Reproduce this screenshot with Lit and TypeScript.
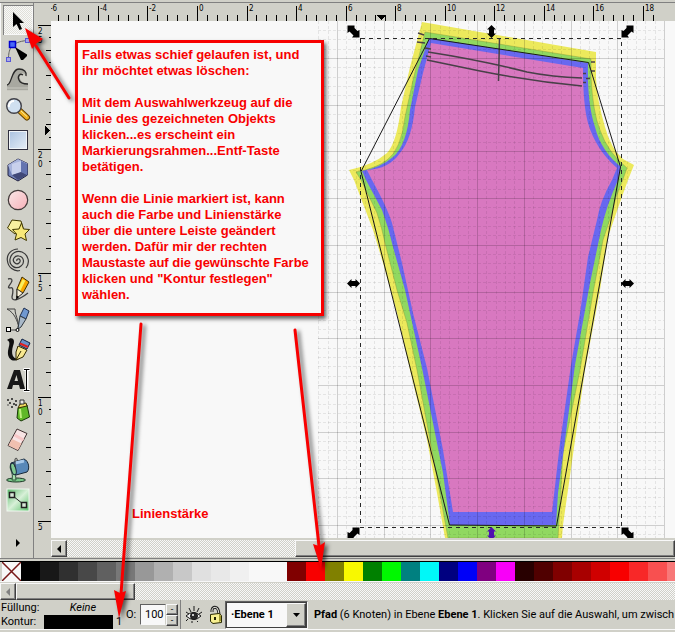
import { LitElement, html, svg, css } from "lit";
import { customElement, state } from "lit/decorators.js";

const range = (from: number, to: number) =>
  Array.from({ length: to - from + 1 }, (_, i) => from + i);

/* Tool icons, each drawn in a 30 x 30 box. */
const tools = [
  { name: "Auswahlwerkzeug", icon: svg`<path d="M10 7V22L13.5 19 16.5 25 19 24 16.5 18H21Z" fill="#000"/>` },
  { name: "Knoten bearbeiten", icon: svg`
    <path d="M5.5 22C6 14 8 7 24 5.5" fill="none" stroke="#606060"/>
    <rect x="3.5" y="22.5" width="4" height="4" fill="#a8a8e8" stroke="#5858d8"/>
    <rect x="22.5" y="3.5" width="4" height="4" fill="#a8a8e8" stroke="#5858d8"/>
    <rect x="6.5" y="6.5" width="6" height="6" fill="#4868f8" stroke="#0000d0" stroke-width="1.5"/>
    <path d="M12 12 24 19.5V21L20 25H18Z" fill="#000"/>` },
  { name: "Objekte verbessern", icon: svg`
    <path d="M4 20C8 20 8 4 16 4C21 4 24 7 23 11C22 8 18 7 17 10C15 14 20 19 25 19V26H4Z" fill="#a8a8a0"/>
    <path d="M4 20C9 20 8 4 16 4C21 4 24 7 23 11M20 10C17 8 14 11 16 15C17 18 20 19 25 19" fill="none" stroke="#282828" stroke-width="1.3"/>
    <path d="M4 23H25M4 25.5H25" stroke="#c8c8c0"/>` },
  { name: "Zoom", icon: svg`
    <path d="M17 16 24 22.5" stroke="#604000" stroke-width="6" stroke-linecap="round"/>
    <path d="M17 16 24 22.5" stroke="#f0b020" stroke-width="4" stroke-linecap="round"/>
    <path d="M18 16 24 21.5" stroke="#f8f0a0" stroke-width="1"/>
    <circle cx="11" cy="11" r="7.3" fill="#d0e0f0" stroke="#404048" stroke-width="1.4"/>
    <path d="M6 12A5 5 0 0 1 11 6" fill="none" stroke="#fff" stroke-width="2"/>` },
  { name: "Rechteck", icon: svg`
    <rect x="5.5" y="5.5" width="19" height="19" fill="url(#blue)" stroke="#303040"/>
    <rect x="6.5" y="6.5" width="17" height="17" fill="none" stroke="#f0f4f8"/>` },
  { name: "3D-Quader", icon: svg`
    <path d="M5 10 15 4 24.5 8.5V20L15 26 5 20.5Z" fill="#7080b8" stroke="#202040" stroke-linejoin="round"/>
    <path d="M5 10 15 4 24.5 8.5 20 17 9 20Z" fill="#a8b4dc"/>
    <path d="M9 9 18 6V17L9 20Z" fill="#c8d0ec"/><path d="M18 6 24.5 9V20L18 17Z" fill="#6474b0"/>
    <path d="M9 20 18 17 24 20 15 25Z" fill="#404878"/>` },
  { name: "Ellipse", icon: svg`<circle cx="15" cy="15" r="9.7" fill="url(#pink)" stroke="#403838" stroke-width="1.2"/>` },
  { name: "Stern", icon: svg`
    <path d="M9 5 18 6 20 13 12 19 4.5 13Z" fill="#f8f0a0" stroke="#403800" stroke-linejoin="round"/>
    <path d="M18.500 8 20.500 14 26.500 14.500 22 19 23.500 25.500 18 22.500 12 25 13.500 19 9.500 14.500 16 14Z" fill="#f8e878" stroke="#403800" stroke-linejoin="round"/>` },
  { name: "Spirale", icon: svg`<path d="M14 16C13 14 16 13 17 15C18 18 14 20 12 18C8 15 12 10 16 11C21 12 22 18 18 21C13 25 6 21 7 14C8 8 14 5 19 7C26 10 27 18 23 23M4.500 16C5 22 11 27 17 25.500M4.500 16C3 9 9 4 15 4" fill="none" stroke="#383838" stroke-width="1.2"/>` },
  { name: "Freihandlinien", icon: svg`
    <path d="M5 4C9 3 10 5 8 8C6 11 4 13 7 13C11 11 10 18 9 22C9 27 16 25 25 18" fill="none" stroke="#404040" stroke-width="1.300"/>
    <path d="M19 2 26 7 20 18 14 22 14 14Z" fill="#f8a800" stroke="#403000"/>
    <path d="M21 5 16 15" stroke="#f8f060" stroke-width="3"/>
    <path d="M14 14 20 18 14 23Z" fill="#f8f0d8" stroke="#303030"/><path d="M13.500 20.500 16 22 13 25Z"/>` },
  { name: "Bezierkurven", icon: svg`
    <path d="M4 4H12C12 12 18 18 14 25H6M4 4C12 8 14 16 16 22" fill="none" stroke="#404040"/>
    <path d="M21 3 26 6 23 14 17 11Z" fill="#7098d0" stroke="#203050"/>
    <path d="M17 11 23 14 18 22 15 24 16 17Z" fill="#a8b8c8" stroke="#303840"/>
    <rect x="3.5" y="22.5" width="4" height="4" fill="#fff" stroke="#000"/>
    <circle cx="14.5" cy="25" r="1.5" fill="#fff" stroke="#000"/>` },
  { name: "Kalligrafie", icon: svg`
    <path d="M4 5C9 1 13 4 10 11C8 18 9 24 16 24C10 28 4 24 5 16C6 10 8 7 4 5Z" fill="#101010"/>
    <path d="M19 4 27 8 24 14 16 10Z" fill="#6890c8" stroke="#102040"/>
    <path d="M17 8.5 25 12" stroke="#e02020" stroke-width="2"/>
    <path d="M15 11 24 15 20 22 13 25 13 17Z" fill="#f8e890" stroke="#302800"/>
    <path d="M13 25 18 16" stroke="#302800"/>` },
  { name: "Text", icon: svg`
    <path d="M4 24 11 5H17L22 24H17L16 20H10L9 24ZM11.500 16H15L13.500 10Z" fill="#181818" fill-rule="evenodd"/>
    <path d="M20.500 4.500H27M20.500 25.500H27M24 4.500V25.500" stroke="#fff" stroke-width="3"/>
    <path d="M21 4.500H26.500M21 25.500H26.500M23.500 5V25" stroke="#000"/>` },
  { name: "Sprühdose", icon: svg`
    <path d="M15 13 24 10 26.500 22 18 26 14 23Z" fill="#60b828" stroke="#183808"/>
    <path d="M17 14 18 23" stroke="#c0f080" stroke-width="2"/>
    <path d="M15 13 17 9 23 8 24 11Z" fill="#f0d860" stroke="#383000"/>
    <path d="M17 5H21V9H17Z" fill="#e8e8e8" stroke="#303030"/>
    <g fill="#202020"><circle cx="5" cy="5" r="1"/><circle cx="9" cy="4" r="1"/><circle cx="13" cy="6" r="1"/><circle cx="7" cy="8" r="1"/><circle cx="11" cy="9" r="1"/><circle cx="9" cy="12" r="1"/><circle cx="13" cy="10" r="1"/><circle cx="5" cy="10" r=".7"/></g>` },
  { name: "Radierer", icon: svg`
    <path d="M14 4 24 8.500 15 25.500 5 20.500Z" fill="#f8e4e4" stroke="#403030" stroke-linejoin="round"/>
    <path d="M9 14 18.500 18.500 15 25 5.500 20.500Z" fill="#f0c0b0"/>
    <path d="M11.500 10 20.500 15" stroke="#f8c8c8" stroke-width="3"/>` },
  { name: "Füllen", icon: svg`
    <ellipse cx="13" cy="25" rx="9.500" ry="2" fill="#78c888" stroke="#203828"/>
    <path d="M8 9C5 14 11 17 9 25H13C12 18 13 16 12 12Z" fill="#a8e0b0" stroke="#305038"/>
    <path d="M8 8 21 4C26 6 27 14 24 17L13 20C9 18 7 12 8 8Z" fill="#5888b8" stroke="#182838"/>
    <path d="M12 8 21 6" stroke="#a8c8e8" stroke-width="3"/>
    <ellipse cx="10.500" cy="14" rx="2.300" ry="6" transform="rotate(-15 10.500 14)" fill="#80c890" stroke="#182838"/>
    <path d="M12 12V5C12 2 15 3 14 6" fill="none" stroke="#303030"/>` },
  { name: "Objektverbinder", icon: svg`
    <rect x="4" y="4" width="22" height="22" fill="url(#green)" stroke="#f0f8f0"/>
    <path d="M10 11 20 19" stroke="#282828"/>
    <rect x="6.500" y="7.500" width="5" height="5" fill="#d8e8d8" stroke="#202020" stroke-width="1.500"/>
    <rect x="18.500" y="17.500" width="5" height="5" fill="#d8e8d8" stroke="#202020" stroke-width="1.500"/>` },
];

const palette = [
  "#000000", "#181818", "#303030", "#484848", "#606060", "#787878", "#989898",
  "#b0b0b0", "#c8c8c8", "#e0e0e0", "#e8e8e8", "#f0f0f0", "#f8f8f8", "#f8f8f8",
  "#800000", "#f80000", "#808000", "#f8f800", "#008000", "#00f800", "#008080",
  "#00f8f8", "#000080", "#0000f8", "#800080", "#f800f8", "#280000", "#500000",
  "#800000", "#a80000", "#d00000", "#f80000", "#f82828", "#f85050", "#f87878",
  "#f8a8a8", "#f8d0d0",
];

const straightHandle = svg`<path d="M-6.500 0-2-4.500V-2.500H2V-4.500L6.500 0 2 4.500V2.500H-2V4.500Z"/>`;
const cornerHandle = svg`<path d="M-6-6H1V-3.500L4-.500 6-1.500V6H-1.500L0 4-4 0-6 1.500Z"/>`;

/* Redraws with as many marks as the window has room for. */
class Ruler extends LitElement {
  private redraw = () => this.requestUpdate();
  connectedCallback() {
    super.connectedCallback();
    window.addEventListener("resize", this.redraw);
  }
  disconnectedCallback() {
    window.removeEventListener("resize", this.redraw);
    super.disconnectedCallback();
  }
}

@customElement("top-ruler")
class TopRuler extends Ruler {
  static styles = css`
    :host { display: block; height: 18px; overflow: hidden; }
    svg { display: block; width: 100%; height: 18px; shape-rendering: crispEdges; }
    text { font: 8px "DejaVu Sans Condensed", "DejaVu Sans", sans-serif; }
  `;
  render() {
    const last = Math.floor((window.innerWidth - 51 - 160) / 9.91);
    return html`<svg aria-hidden="true">
      ${range(-15, last).map((i) => {
        const x = Math.round(146 + i * 9.91);
        const major = i % 5 === 0;
        return svg`<path d="M${x}.5 ${major ? 3 : 12}V18" stroke="#000"/>
          ${major ? svg`<text x=${x + 2} y="8">${(i / 5) * 2}</text>` : ""}`;
      })}
      <path d="M326 12H335L330.500 17Z"/>
    </svg>`;
  }
}

@customElement("side-ruler")
class SideRuler extends Ruler {
  static styles = css`
    :host { display: block; width: 17px; overflow: hidden; contain: size; }
    svg { display: block; width: 17px; height: 100%; shape-rendering: crispEdges; }
    text { font: 8px "DejaVu Sans Condensed", "DejaVu Sans", sans-serif; }
  `;
  render() {
    const last = Math.floor((window.innerHeight - 130) / 12.4);
    return html`<svg aria-hidden="true">
      ${range(0, last).map((i) => {
        const y = Math.round(4 + i * 12.4);
        const start = i % 10 === 0 ? 4 : i % 2 === 0 ? 12 : 15;
        const label = String(Math.abs(25 - i / 2));
        return svg`<path d="M${start} ${y}.5H17" stroke="#000"/>
          ${i % 10 === 0
            ? [...label].map((digit, n) => svg`<text x="4" y=${y + 9 + n * 9}>${digit}</text>`)
            : ""}`;
      })}
      <path d="M11 105V114L16 109.500Z"/>
    </svg>`;
  }
}

@customElement("drawing-canvas")
class DrawingCanvas extends LitElement {
  static styles = css`
    :host { display: block; background: #f8f8f8; overflow: hidden; contain: size; }
    svg { display: block; width: 100%; height: 100%; }
    .major { stroke: #000; stroke-opacity: 0.17; }
    .minor { stroke: #000; stroke-opacity: 0.08; stroke-dasharray: 3 2; }
    .seam { fill: none; stroke: #484048; stroke-width: 1.5; }
    .frame { fill: none; stroke: #282828; stroke-dasharray: 4 4; shape-rendering: crispEdges; }
  `;
  render() {
    return html`<svg role="img" aria-label="Schnittmuster mit Auswahlrahmen">
      <g transform="translate(-51 -21)">
        <path fill="#ece95c" d="M422 22 596 52V78Q597 100 605 127Q611 149 623 159L634 165 628 180 618 208 608 237 600 290 585 370 563 525 562 538H445L437 493 427 440 410 370 397 313 383 263 373 230 354 180 349 170Q373 165 387 153Q397 142 401 107L410 67Z"/>
        <path fill="#90d860" stroke="#889838" stroke-opacity=".6" stroke-width=".7" d="M425 32 591 59V77Q593 113 600 130Q608 153 627 168L622 182Q615 197 612 213L603 240 593 293 580 370 563 453 558 538H448L438 483 417 370 407 323 397 290 385 243Q382 228 377 213L361 180 356 172Q377 168 387 160Q401 150 405 117L413 80Z"/>
        <path fill="#6868f0" d="M429 38 588 63Q587 103 595 127Q601 151 621 167L618 180Q606 207 601 230L590 283 575 365 558 493 556 525H450L443 473 422 368 405 290 393 247Q389 229 382 210L366 180 362 171Q380 168 393 157Q407 145 410 110L418 70Z"/>
        <path fill="#d878c0" d="M431 43 583 68Q583 105 588 123Q596 150 617 168L612 180Q600 201 597 220L588 257 580 313 571 365 560 443 552 512H453L443 450 427 368 413 313 402 263 392 223Q387 207 372 180L367 170Q389 169 400 153Q412 139 415 107L423 73Z"/>
        ${range(-40, 36).map((i) => {
          const x = 337.5 + Math.round(i * 9.34);
          return x > 317 && x < 666
            ? svg`<path class=${i % 5 === 0 ? "major" : "minor"} d="M${x} 21V538"/>` : "";
        })}
        ${range(-3, 51).map((i) => {
          const y = 58.5 + Math.round(i * 9.34);
          return svg`<path class=${i % 5 === 0 ? "major" : "minor"} d="M318 ${y}H664"/>`;
        })}
        <g class="seam">
          <path d="M428 52Q480 60 527 72Q552 77 582 78M427 60 480 71Q530 81 582 86M499.500 38 498.500 81"/>
          <path d="M418 33 424 35M417 42 425 43M425 48 431 49M426 56 431 57M591 62H595M591 71H595M583 73.500H586M586 78.500H590M583 82.500H586"/>
        </g>
        <path fill="none" stroke="#181818" d="M429.500 38.500 588.500 62.500 620.500 167 556.500 526 449.500 525 361 171.500Z"/>
        <path class="frame" d="M360.500 38.500H621.500V527.500H360.500Z"/>
        <g transform="translate(353.500 31.500)">${cornerHandle}</g>
        <g transform="translate(627.500 31.500) scale(-1 1)">${cornerHandle}</g>
        <g transform="translate(353.500 533.500) scale(-1 1)">${cornerHandle}</g>
        <g transform="translate(627.500 533.500)">${cornerHandle}</g>
        <g transform="translate(353.500 283.500)">${straightHandle}</g>
        <g transform="translate(627.500 283.500)">${straightHandle}</g>
        <g transform="translate(491.500 31.500) rotate(90)">${straightHandle}</g>
        <g transform="translate(491.500 533.500) rotate(90)" fill="#5010b0">${straightHandle}</g>
      </g>
    </svg>`;
  }
}

@customElement("app-root")
class AppRoot extends LitElement {
  @state() private activeTool = 0;

  static styles = css`
    :host {
      display: flex; flex-direction: column; position: relative; min-height: 100vh;
      overflow: hidden; background: #d0d0c8; color: #000;
      font: 11px/14px Roboto, "Liberation Sans", sans-serif;
    }
    * { box-sizing: border-box; }
    button, input, select { font: inherit; color: inherit; margin: 0; padding: 0; border-radius: 0; }
    svg { display: block; }
    .workspace {
      flex: 1; display: grid; grid-template-columns: 34px 1fr; margin-top: 2px;
      border-top: 1px solid #808080; border-bottom: 1px solid #808080;
    }
    .toolbox {
      display: flex; flex-direction: column; align-items: center; padding: 2px 1px 0 2px;
      border-left: 1px solid #f8f8f8; border-right: 1px solid #808080;
    }
    .tool { width: 30px; height: 30px; border: 0; background: none; }
    .tool svg { width: 30px; height: 30px; }
    .tool.on {
      background: repeating-conic-gradient(#f8f8f8 0 25%, #e0e0d8 0 50%) 0 0 / 2px 2px;
      box-shadow: inset 1px 1px #808080, inset -1px -1px #f8f8f8;
    }
    .more { margin-top: 20px; width: 30px; height: 16px; border: 0; background: none; }
    .editor { display: grid; grid-template: 18px 1fr 20px / 17px 1fr; min-width: 0; }
    .editor top-ruler { grid-column: 2; }
    .scroll {
      display: flex; height: 17px;
      background: repeating-conic-gradient(#f8f8f8 0 25%, #d0d0c8 0 50%) 0 0 / 2px 2px;
    }
    .editor .scroll { grid-column: 2; margin-top: 2px; }
    .raised {
      background: #d0d0c8; border: 1px solid; border-color: #f8f8f8 #404040 #404040 #f8f8f8;
      box-shadow: inset -1px -1px #808080;
    }
    .step { width: 16px; height: 17px; display: grid; place-items: center; flex: none; }
    .gap { width: 228px; }
    .rest { flex: 1; }
    .thumb { width: 119px; }
    .palette {
      display: flex; margin-top: 2px; padding-left: 2px; overflow: hidden;
      border-top: 1px solid #000; border-bottom: 1px solid #f8f8f8; background: #d0d0c8;
    }
    .swatch { width: 19px; height: 19px; flex: none; border: 0; }
    .none { background: #f8f8f8; }
    .palette + .scroll { margin-top: 1px; }
    .status {
      display: flex; align-items: center; height: 30px; white-space: nowrap; overflow: hidden;
      border-bottom: 1px solid #f8f8f8; margin-bottom: 2px;
    }
    .style { display: grid; grid-template-columns: 43px 69px 10px; padding-left: 1px; align-items: center; }
    .nofill { font-style: italic; text-align: center; padding-left: 9px; }
    .stroke { height: 14px; background: #000; border: 0; grid-column: 2; }
    .width { padding-left: 3px; }
    .opacity { display: flex; align-items: center; margin-left: 3px; }
    .opacity label { width: 14px; }
    .opacity input {
      width: 26px; height: 21px; padding-left: 4px; background: #f8f8f8;
      border: 1px solid; border-color: #606060 #d0d0c8 #f8f8f8 #606060;
    }
    .spin { display: grid; width: 12px; }
    .spin button { height: 11px; line-height: 8px; font-size: 9px; text-align: center; }
    .rule { width: 1px; height: 29px; background: #808080; margin: 0 4px 0 2px; }
    .icon { border: 0; background: none; width: 18px; height: 20px; flex: none; }
    .icon + .icon { margin: 0 0 0 4px; }
    .layer {
      position: relative; width: 83px; height: 28px; flex: none;
      border: 1px solid; border-color: #606060 #f8f8f8 #f8f8f8 #606060;
    }
    .layer select {
      appearance: none; width: 100%; height: 100%; border: 1px solid #404040;
      background: #f8f8f8; font-weight: bold; padding-left: 4px;
    }
    .layer .drop {
      position: absolute; top: 1px; right: 1px; bottom: 1px; width: 20px;
      display: grid; place-items: center; pointer-events: none;
    }
    .message { margin: 0 0 0 6px; }
    .note {
      position: absolute; left: 75px; top: 40px; width: 249px; height: 276px; padding: 4px;
      border: 3px solid #f80000; background: #f8f8f8; box-shadow: 2px 3px 4px rgba(0, 0, 0, 0.6);
    }
    .note, .label { color: #f80000; font: bold 13px/16px "Liberation Sans", Arial, sans-serif; white-space: nowrap; }
    .note p { margin: 0 0 16px; }
    .label { position: absolute; left: 132px; top: 506px; }
    .arrows {
      position: absolute; left: 0; top: 0; width: 100%; height: 100%; pointer-events: none;
      filter: drop-shadow(3px 2px 2px rgba(0, 0, 0, 0.6));
    }
  `;

  private leftArrow(color = "#000") {
    return html`<svg width="4" height="8" aria-hidden="true"><path d="M4 0V8L0 4Z" fill=${color}/></svg>`;
  }

  render() {
    return html`
      <div class="workspace">
        <div class="toolbox" role="toolbar" aria-label="Werkzeuge">
          ${tools.map((tool, i) => html`
            <button class="tool ${i === this.activeTool ? "on" : ""}" aria-label=${tool.name}
              @click=${() => (this.activeTool = i)}>
              <svg viewBox="0 0 30 30">
                <defs>
                  <linearGradient id="blue" x2="1" y2="1"><stop stop-color="#a8c0e0"/><stop offset="1" stop-color="#e8f0f8"/></linearGradient>
                  <linearGradient id="pink" x2="1" y2="1"><stop stop-color="#f8e8e8"/><stop offset="1" stop-color="#f8b0b8"/></linearGradient>
                  <linearGradient id="green" x2="1" y2="1"><stop stop-color="#58b868"/><stop offset=".5" stop-color="#d8f0d8"/><stop offset="1" stop-color="#58c068"/></linearGradient>
                </defs>
                ${tool.icon}
              </svg>
            </button>`)}
          <button class="more" aria-label="Weitere Werkzeuge">
            <svg width="30" height="16" aria-hidden="true"><path d="M13 4V12L17 8Z"/></svg>
          </button>
        </div>
        <div class="editor">
          <top-ruler></top-ruler>
          <side-ruler></side-ruler>
          <drawing-canvas></drawing-canvas>
          <div class="scroll">
            <button class="raised step" aria-label="Nach links">${this.leftArrow()}</button>
            <div class="gap"></div>
            <div class="raised rest"></div>
          </div>
        </div>
      </div>
      <div class="palette" role="group" aria-label="Farbpalette">
        <button class="swatch none" aria-label="Keine Farbe">
          <svg width="19" height="19" aria-hidden="true"><path d="M0 0 19 19M19 0 0 19" stroke="#781818" stroke-width="1.5"/></svg>
        </button>
        ${palette.map((color) => html`<button class="swatch" aria-label=${color} style="background:${color}"></button>`)}
      </div>
      <div class="scroll">
        <button class="raised step" aria-label="Palette nach links">${this.leftArrow("#808080")}</button>
        <div class="raised thumb"></div>
      </div>
      <div class="status">
        <div class="style">
          <span>Füllung:</span><span class="nofill">Keine</span><span></span>
          <span>Kontur:</span><button class="stroke" aria-label="Konturfarbe"></button><span class="width">1</span>
        </div>
        <div class="opacity">
          <label for="opacity">O:</label><input id="opacity" value="100">
          <div class="spin">
            <button class="raised" aria-label="Mehr">-</button>
            <button class="raised" aria-label="Weniger">-</button>
          </div>
        </div>
        <div class="rule"></div>
        <button class="icon" aria-label="Ebene sichtbar">
          <svg width="18" height="20" fill="none" stroke="#181818" aria-hidden="true">
            <path d="M1 11Q8 4 16 11Q9 18 1 11Z" fill="#f0f0f0"/>
            <circle cx="9" cy="11" r="3.5" fill="#282828"/><circle cx="8" cy="10" r="1" fill="#fff" stroke="none"/>
            <path d="M1 7 4 9M4 3 6 7M9 1V6M14 3 12 7M17 7 14 9M3 14 1 16M7 16V18M12 16 13 17"/>
          </svg>
        </button>
        <button class="icon" aria-label="Ebene sperren">
          <svg width="18" height="20" aria-hidden="true">
            <path d="M5 7V5Q6 1 10 3Q12 5 12 11" fill="none" stroke="#202020" stroke-width="3"/>
            <path d="M5 7V5Q6 1 10 3Q12 5 12 11" fill="none" stroke="#e8e8e0"/>
            <path d="M3.5 9.5 12 8.5 14.5 10.5V17.5L6 18.5 3.5 16.5Z" fill="#f8f090" stroke="#282800"/>
            <path d="M12 9V17L14 16V11Z" fill="#a09830"/><path d="M8 12V15" stroke="#202000" stroke-width="2"/>
          </svg>
        </button>
        <div class="layer">
          <select aria-label="Aktuelle Ebene"><option>·Ebene 1</option></select>
          <span class="raised drop"><svg width="7" height="4" aria-hidden="true"><path d="M0 0H7L3.5 4Z"/></svg></span>
        </div>
        <p class="message"><b>Pfad</b> (6 Knoten) in Ebene <b>Ebene 1</b>. Klicken Sie auf die Auswahl, um zwisch</p>
      </div>
      <div class="note">
        <p>Falls etwas schief gelaufen ist, und<br>ihr möchtet etwas löschen:</p>
        <p>Mit dem Auswahlwerkzeug auf die<br>Linie des gezeichneten Objekts<br>klicken...es erscheint ein<br>Markierungsrahmen...Entf-Taste<br>betätigen.</p>
        <p>Wenn die Linie markiert ist, kann<br>auch die Farbe und Linienstärke<br>über die untere Leiste geändert<br>werden. Dafür mir der rechten<br>Maustaste auf die gewünschte Farbe<br>klicken und "Kontur festlegen"<br>wählen.</p>
      </div>
      <span class="label">Linienstärke</span>
      <svg class="arrows" aria-hidden="true" fill="#f80000" stroke="#f80000" stroke-width="3" stroke-linecap="round">
        <path d="M69 98 36 46M141 324 121 594M295 330 319 546"/>
        <path stroke="none" d="M25 28 43 39 37 43 32 49ZM119 618 114 590 120 593 126 591ZM321 569 313 544 319 546 325 542Z"/>
      </svg>
    `;
  }
}
